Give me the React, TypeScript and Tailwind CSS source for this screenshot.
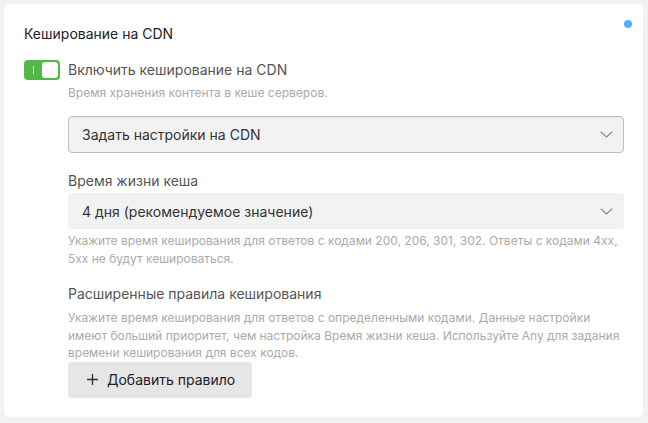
import React from "react";

const Chevron: React.FC = () => (
  <svg width="13" height="7" viewBox="0 0 13 7" fill="none">
    <path d="M1 1l5.5 5 5.5-5" stroke="#8a8a8a" strokeWidth="1.1" strokeLinecap="round" strokeLinejoin="round" />
  </svg>
);

const App: React.FC = () => {
  return (
    <div className="h-[423px] w-[648px] bg-[#f2f2f2] p-1 font-['Inter',sans-serif]">
      <div className="relative h-[413px] w-[639px] rounded-md bg-white pl-5 pr-[19px] pt-5">
        <span className="absolute right-[11px] top-[16px] h-2 w-2 rounded-full bg-[#4db3f5]" />

        <h2 className="text-[14px] leading-5 text-[#222]">Кеширование на CDN</h2>

        <div className="mt-4 flex items-center gap-2">
          <div className="relative flex h-5 w-9 items-center rounded-[4px] bg-[#52b848]">
            <span className="ml-[9px] h-2 w-px bg-white" />
            <span className="absolute right-[2px] top-[2px] h-4 w-4 rounded-[3px] bg-white" />
          </div>
          <span className="text-[14px] leading-5 text-[#555]">Включить кеширование на CDN</span>
        </div>

        <div className="pl-11">
          <p className="mt-1 text-[12px] leading-[18px] text-[#aaa]">Время хранения контента в кеше серверов.</p>

          <button className="mt-[14px] flex h-[37px] w-full items-center justify-between rounded-[4px] border border-[#bdbdbd] bg-[#f2f2f2] pl-[13px] pr-[10px] text-left text-[14px] text-[#333] shadow-[inset_0_1px_1px_rgba(0,0,0,0.04)]">
            <span>Задать настройки на CDN</span>
            <Chevron />
          </button>

          <div className="mt-[18px] text-[14px] leading-5 text-[#555]">Время жизни кеша</div>
          <button className="mt-[2px] flex h-9 w-full items-center justify-between rounded-[4px] bg-[#f2f2f2] pl-[14px] pr-[11px] text-left text-[14px] text-[#333]">
            <span>4 дня (рекомендуемое значение)</span>
            <Chevron />
          </button>
          <p className="mt-[3px] text-[12px] leading-[18px] text-[#aaa]">
            Укажите время кеширования для ответов с кодами 200, 206, 301, 302. Ответы с кодами 4xx, 5xx не будут кешироваться.
          </p>

          <div className="mt-4 text-[14px] leading-5 text-[#555]">Расширенные правила кеширования</div>
          <p className="mt-[5px] text-[12px] leading-[17.5px] text-[#aaa]">
            Укажите время кеширования для ответов с определенными кодами. Данные настройки имеют больший приоритет, чем настройка Время жизни кеша. Используйте Any для задания времени кеширования для всех кодов.
          </p>

          <button className="flex h-9 items-center gap-2 rounded-[4px] bg-[#e6e6e6] pl-[18px] pr-[17px] text-[14px] text-[#222]">
            <svg width="13" height="13" viewBox="0 0 13 13">
              <path d="M6.5 1v11M1 6.5h11" stroke="#333" strokeWidth="1.4" />
            </svg>
            <span>Добавить правило</span>
          </button>
        </div>
      </div>
    </div>
  );
};

export default App;
